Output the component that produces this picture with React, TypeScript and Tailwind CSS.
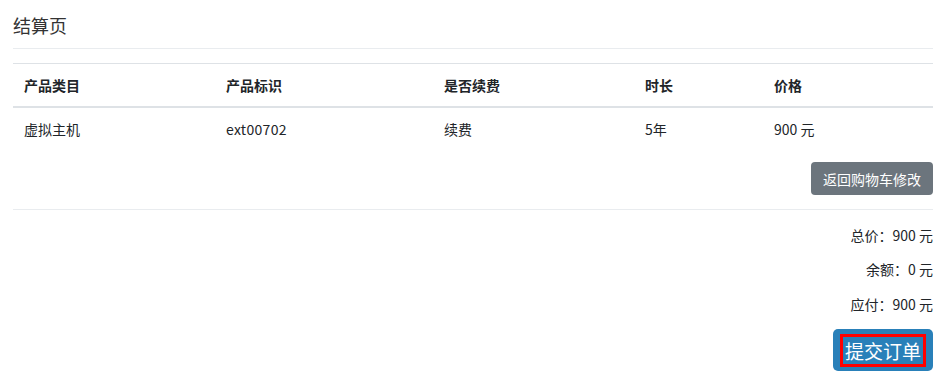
import React from "react";

export default function App() {
  const font = { fontFamily: '"Noto Sans CJK SC", "Liberation Sans", sans-serif' };
  return (
    <div className="bg-white w-[941px] h-[379px] overflow-hidden text-[14px] text-[#212529]" style={font}>
      <div className="pl-[13px] pr-[8px] pt-[1px]">
        <h3 className="text-[18px] leading-[24px] pt-[12px] pb-[11px] text-[#333] font-normal">结算页</h3>
        <div className="border-t border-[#e9ecef] mb-[14px]" />
        <table className="w-full border-collapse table-fixed">
          <colgroup>
            <col className="w-[201px]" />
            <col className="w-[218px]" />
            <col className="w-[201px]" />
            <col className="w-[129px]" />
            <col />
          </colgroup>
          <thead>
            <tr className="border-t border-[#dee2e6] border-b-2">
              <th className="text-left font-bold px-[11px] py-[11px] leading-[20px]">产品类目</th>
              <th className="text-left font-bold px-[12px] py-[11px] leading-[20px]">产品标识</th>
              <th className="text-left font-bold px-[12px] py-[11px] leading-[20px]">是否续费</th>
              <th className="text-left font-bold px-[12px] py-[11px] leading-[20px]">时长</th>
              <th className="text-left font-bold px-[12px] py-[11px] leading-[20px]">价格</th>
            </tr>
          </thead>
          <tbody>
            <tr>
              <td className="px-[11px] py-[11px] leading-[20px]">虚拟主机</td>
              <td className="px-[12px] py-[11px] leading-[20px] tracking-[0.3px]">ext00702</td>
              <td className="px-[12px] py-[11px] leading-[20px]">续费</td>
              <td className="px-[12px] py-[11px] leading-[20px]">5年</td>
              <td className="px-[12px] py-[11px] leading-[20px]">900 元</td>
            </tr>
          </tbody>
        </table>
        <div className="flex justify-end mt-[12px]">
          <button className="bg-[#6c757d] text-white rounded-[4px] h-[33px] px-[12px] text-[14px] leading-[20px]">返回购物车修改</button>
        </div>
        <div className="border-t border-[#e9ecef] mt-[14px]" />
        <div className="flex flex-col items-end">
          <p className="mt-[15px] leading-[20px]">总价：900 元</p>
          <p className="mt-[14px] leading-[20px]">余额：0 元</p>
          <p className="mt-[15px] leading-[20px]">应付：900 元</p>
          <button className="mt-[15px] bg-[#2980b9] rounded-[5px] w-[100px] h-[42px] flex items-center justify-center">
            <span className="border-[3px] border-[#ff0000] text-white text-[19px] leading-[27px] w-[86px] h-[33px] flex items-center justify-center">提交订单</span>
          </button>
        </div>
      </div>
    </div>
  );
}
